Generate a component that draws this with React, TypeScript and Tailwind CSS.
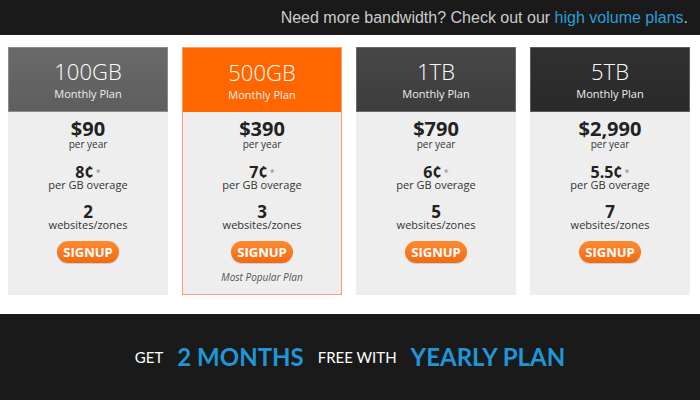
import React from 'react';

const PLANS = [
  { size: '100GB', price: '$90', overage: '8¢', sites: '2', head: 'bg-gradient-to-b from-[#6a6a6a] to-[#5e5e5e] border border-[#8a8a8a] h-[65px]' },
  { size: '500GB', price: '$390', overage: '7¢', sites: '3', head: 'bg-[#ff6600] h-[64px]', popular: true },
  { size: '1TB', price: '$790', overage: '6¢', sites: '5', head: 'bg-gradient-to-b from-[#474747] to-[#3d3d3d] border border-[#6a6a6a] h-[65px]' },
  { size: '5TB', price: '$2,990', overage: '5.5¢', sites: '7', head: 'bg-gradient-to-b from-[#303030] to-[#2a2a2a] border border-[#5a5a5a] h-[65px]' },
];

function PlanCard({ plan }: { plan: (typeof PLANS)[number] }) {
  return (
    <div className={`flex w-[160px] flex-col ${plan.popular ? 'border border-[#f9a066]' : ''}`}>
      <div className={`flex flex-col items-center justify-center ${plan.head} text-white`}>
        <div className="text-[22px] font-light leading-[26px]">{plan.size}</div>
        <div className="mt-[3px] text-[11px] leading-[14px] text-[#eeeeee]">Monthly Plan</div>
      </div>
      <div className="flex flex-1 flex-col items-center bg-[#eeeeee] pt-[8px] text-[#222]">
        <div className="h-[18px] text-[20px] font-bold leading-[18px]">{plan.price}</div>
        <div className="h-[12px] text-[10px] leading-[12px] text-[#333]">per year</div>
        <div className="mt-[15px] flex h-[14px] items-center text-[16px] font-bold leading-[14px]">
          {plan.overage}
          <span className="ml-[2px] text-[9px] font-normal leading-[9px] text-[#888]">*</span>
        </div>
        <div className="h-[12px] text-[11px] leading-[12px] text-[#333]">per GB overage</div>
        <div className="mt-[14px] h-[14px] text-[17px] font-bold leading-[14px]">{plan.sites}</div>
        <div className="h-[12px] text-[11px] leading-[12px] text-[#333]">websites/zones</div>
        <div className="mt-[10px] flex h-[22px] w-[62px] items-center justify-center rounded-full bg-gradient-to-b from-[#ff8a30] to-[#f06a10] text-[13px] font-bold leading-[16px] text-white shadow-[0_1px_1px_rgba(0,0,0,0.15)]">
          SIGNUP
        </div>
        {plan.popular && (
          <div className="mt-[8px] text-[10px] italic leading-[12px] text-[#555]">Most Popular Plan</div>
        )}
      </div>
    </div>
  );
}

export default function App() {
  return (
    <div className="flex h-[400px] w-[700px] flex-col bg-white" style={{ fontFamily: '"Open Sans", sans-serif' }}>
      <div
        className="flex h-[35px] items-center justify-end bg-[#1a1a1a] pr-[12px] text-[16px] text-[#cccccc]"
        style={{ fontFamily: '"Liberation Sans", Arial, sans-serif' }}
      >
        Need more bandwidth? Check out our&nbsp;<span className="text-[#2b9ddb]">high volume plans</span>.
      </div>
      <div className="flex h-[260px] gap-[14px] pl-[8px] pt-[12px]">
        {PLANS.map((p) => (
          <PlanCard key={p.size} plan={p} />
        ))}
      </div>
      <div
        className="mt-[19px] flex flex-1 items-center justify-center bg-[#1a1a1a]"
        style={{ fontFamily: 'Lato, sans-serif' }}
      >
        <span className="text-[15px] text-white">GET</span>
        <span className="ml-[14px] text-[24px] font-bold text-[#1f96d8]">2 MONTHS</span>
        <span className="ml-[14px] text-[15px] text-white">FREE WITH</span>
        <span className="ml-[14px] text-[24px] font-bold text-[#1f96d8]">YEARLY PLAN</span>
      </div>
    </div>
  );
}
